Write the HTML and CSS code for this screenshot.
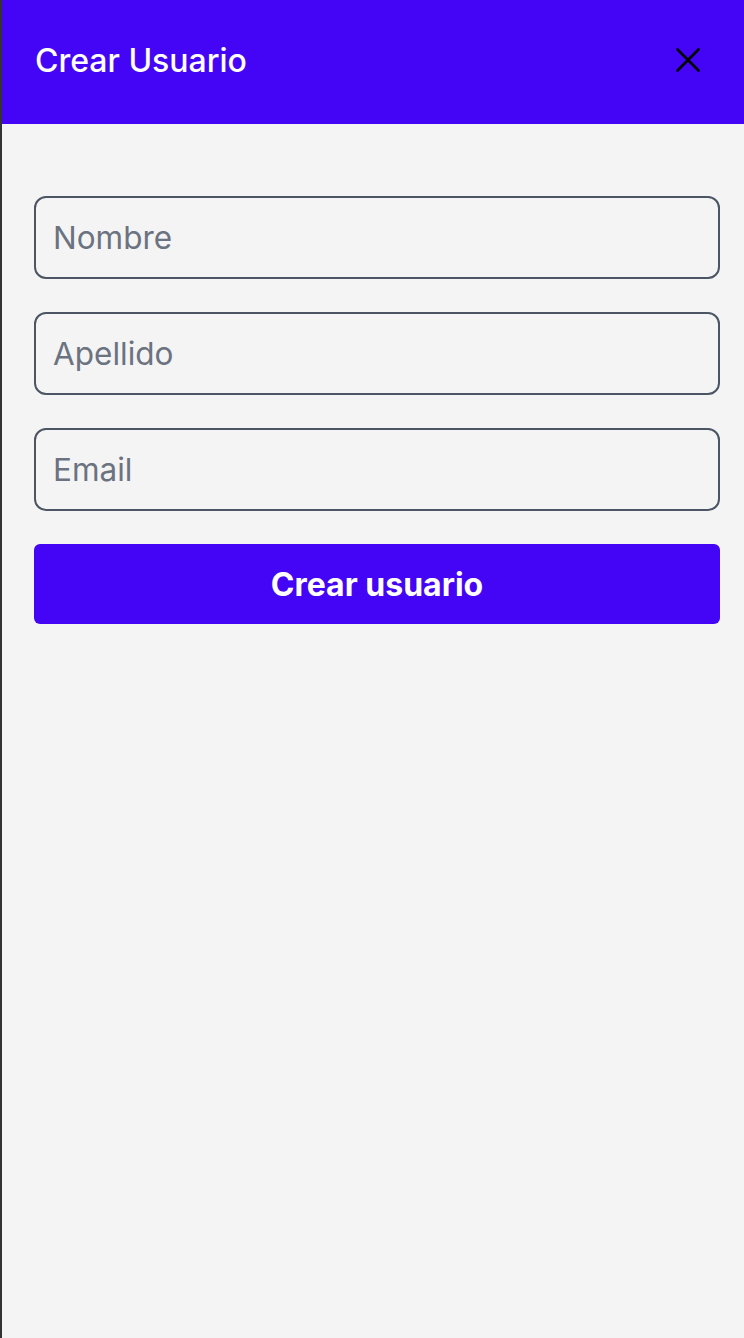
FILE: index.html
```html
<!DOCTYPE html>
<html lang="es">
<head>
<meta charset="utf-8">
<title>Crear Usuario</title>
<link rel="stylesheet" href="styles.css">
</head>
<body>
<div class="drawer">
  <header class="drawer-header">
    <h1 class="drawer-title">Crear Usuario</h1>
    <button class="close-btn" type="button" aria-label="Cerrar">
      <svg width="24" height="24" viewBox="0 0 24 24" fill="none" stroke="#000" stroke-width="2.6" stroke-linecap="round">
        <line x1="1.5" y1="1.5" x2="22.5" y2="22.5"/>
        <line x1="22.5" y1="1.5" x2="1.5" y2="22.5"/>
      </svg>
    </button>
  </header>
  <form class="drawer-body">
    <input class="field" type="text" placeholder="Nombre">
    <input class="field" type="text" placeholder="Apellido">
    <input class="field" type="email" placeholder="Email">
    <button class="submit" type="button">Crear usuario</button>
  </form>
</div>
</body>
</html>
```

FILE: styles.css
```css
* { box-sizing: border-box; }
html, body { margin: 0; height: 100%; }
body {
  font-family: Inter, "Noto Sans", sans-serif;
  background: #f4f4f4;
}
.drawer {
  min-height: 100%;
  border-left: 2px solid #333;
  background: #f4f4f4;
}
.drawer-header {
  height: 124px;
  background: #4405f7;
  display: flex;
  align-items: center;
  justify-content: space-between;
  padding: 0 44px 4px 33px;
}
.drawer-title {
  margin: 0;
  color: #fff;
  font-size: 32px;
  font-weight: 500;
}
.close-btn {
  background: none;
  border: 0;
  padding: 0;
  width: 24px;
  height: 24px;
  display: flex;
  cursor: pointer;
}
.drawer-body {
  display: flex;
  flex-direction: column;
  gap: 33px;
  padding: 72px 24px 0 32px;
}
.field {
  height: 83px;
  border: 2px solid #4b5563;
  border-radius: 12px;
  background: #f4f4f4;
  padding: 0 17px;
  font-family: inherit;
  font-size: 31.5px;
  color: #111;
}
.field::placeholder { color: #6b7280; }
.submit {
  height: 80px;
  border: 0;
  border-radius: 6px;
  background: #4405f7;
  color: #fff;
  font-family: inherit;
  font-size: 32px;
  font-weight: 700;
  cursor: pointer;
}
```
